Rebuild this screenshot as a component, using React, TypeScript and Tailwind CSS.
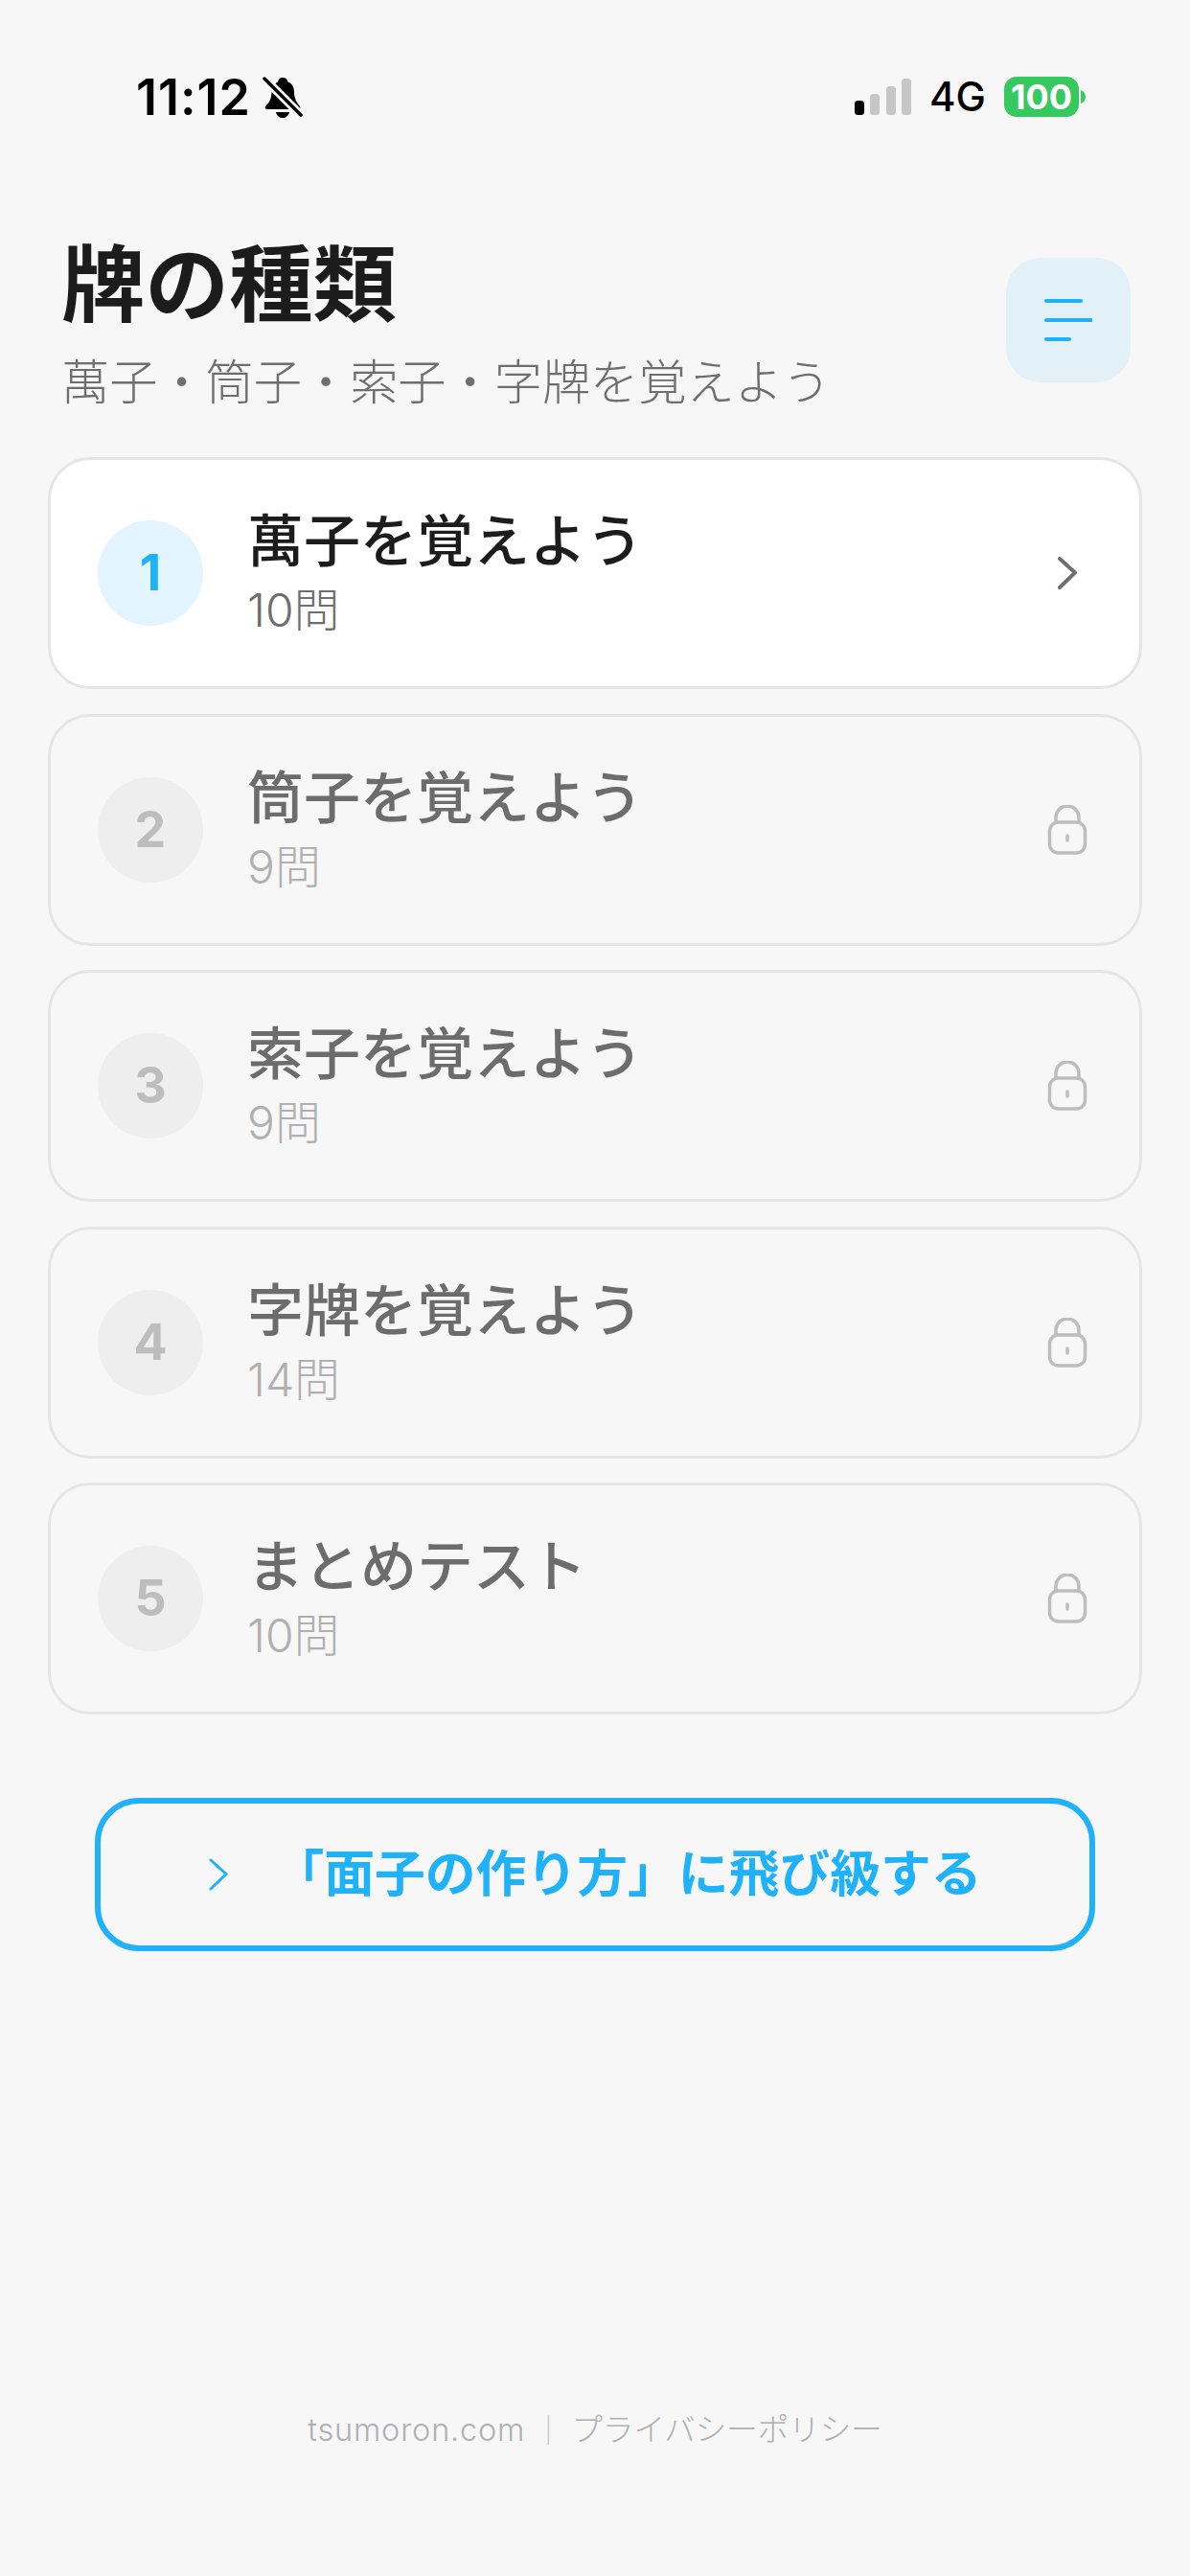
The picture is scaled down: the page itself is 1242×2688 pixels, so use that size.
const lessons = [
  { id: 1, title: "萬子を覚えよう", count: "10問", unlocked: true },
  { id: 2, title: "筒子を覚えよう", count: "9問", unlocked: false },
  { id: 3, title: "索子を覚えよう", count: "9問", unlocked: false },
  { id: 4, title: "字牌を覚えよう", count: "14問", unlocked: false },
  { id: 5, title: "まとめテスト", count: "10問", unlocked: false },
];

function StatusBar() {
  return (
    <div className="flex h-[200px] items-start justify-between pl-[142px] pr-[108px] pt-[74px] font-['Inter',sans-serif] text-black">
      <div className="flex items-center gap-[12px]">
        <span className="text-[52px] leading-[56px] font-semibold tracking-[1px]">11:12</span>
        <svg width="42" height="44" viewBox="0 0 42 44" fill="none">
          <path
            d="M21 1c3 0 5 2 5.500 4.500C31 7 33 11 33 16c0 6 2 10 6 15 1 2 0 3-2 3H5c-2 0-3-1-2-3 3-3 5-6 6-10 1-9 3-14 7-15.500C16.500 3 18 1 21 1Z"
            fill="#000"
          />
          <path d="M14 37c1 4 4 6 7 6s6-2 7-6Z" fill="#000" />
          <path d="M1 1 41 41" stroke="#f7f7f7" strokeWidth="9" />
          <path d="M2 2 40 40" stroke="#000" strokeWidth="3.500" strokeLinecap="round" />
        </svg>
      </div>
      <div className="flex items-center pt-[5px]">
        <svg width="60" height="40" viewBox="0 0 60 40" className="mr-[18px] mt-[2px]">
          <rect x="0" y="23" width="10" height="15" rx="3.500" fill="#000" />
          <rect x="16" y="16" width="10" height="22" rx="3.500" fill="#c6c6c6" />
          <rect x="33" y="8" width="10" height="30" rx="3.500" fill="#c6c6c6" />
          <rect x="49" y="0" width="10" height="38" rx="3.500" fill="#c6c6c6" />
        </svg>
        <span className="text-[42px] leading-[44px] font-medium">4G</span>
        <div className="ml-[19px] flex h-[42px] w-[78px] items-center justify-center rounded-[13px] bg-[#36c95f] text-[36px] leading-none font-bold text-white">
          100
        </div>
        <svg width="6" height="14" viewBox="0 0 6 14" className="ml-[2px]">
          <path d="M0 0c3 1 5 4 5 7s-2 6-5 7Z" fill="#36c95f" />
        </svg>
      </div>
    </div>
  );
}

function LockIcon() {
  return (
    <svg width="42" height="52" viewBox="0 0 42 52" fill="none" stroke="#bdbdbd" strokeWidth="3.500">
      <rect x="2.500" y="18" width="37" height="32" rx="9" />
      <path d="M9 18v-5a12 12 0 0 1 24 0v5" />
      <path d="M21 32v5" strokeLinecap="round" />
    </svg>
  );
}

function ChevronRight({ color, stroke }: { color: string; stroke: number }) {
  return (
    <svg width="22" height="34" viewBox="0 0 22 34" fill="none">
      <path d="M3 2 19 16.500 3 32" stroke={color} strokeWidth={stroke} strokeLinecap="round" strokeLinejoin="round" />
    </svg>
  );
}

function LessonCard({ lesson }: { lesson: (typeof lessons)[number] }) {
  const on = lesson.unlocked;
  return (
    <div
      className={`flex h-[242px] items-center rounded-[44px] border-[3px] border-[#e5e5e5] pl-[49px] pr-[53px] ${
        on ? "bg-white" : "bg-[#f7f7f7]"
      }`}
    >
      <div
        className={`flex h-[110px] w-[110px] shrink-0 items-center justify-center rounded-full font-['Inter',sans-serif] text-[52px] font-bold ${
          on ? "bg-[#e1f4ff] text-[#1fb2fb]" : "bg-[#eeeeee] text-[#bdbdbd]"
        }`}
      >
        {lesson.id}
      </div>
      <div className="ml-[46px] flex-1">
        <p className={`text-[59px] leading-[76px] ${on ? "font-medium text-[#1c1c1c]" : "font-medium text-[#6c6c6c]"}`}>
          {lesson.title}
        </p>
        <p className={`mt-[2px] text-[48px] leading-[64px] font-light ${on ? "text-[#6e6e6e]" : "text-[#b0b0b0]"}`}>
          {lesson.count}
        </p>
      </div>
      <div className="flex w-[44px] justify-center">
        {on ? <ChevronRight color="#707070" stroke={4} /> : <LockIcon />}
      </div>
    </div>
  );
}

export default function App() {
  return (
    <div className="flex min-h-[2688px] w-full flex-col bg-[#f7f7f7] font-['Inter','Noto_Sans_CJK_JP',sans-serif]">
      <StatusBar />

      <header className="flex items-start justify-between pl-[64px] pr-[62px] pt-[42px]">
        <div>
          <h1 className="text-[87.500px] leading-[110px] font-bold text-[#1c1c1c]">牌の種類</h1>
          <p className="mt-[11px] text-[50.200px] leading-[72px] font-light text-[#6e6e6e]">萬子・筒子・索子・字牌を覚えよう</p>
        </div>
        <button type="button" className="mt-[27px] flex h-[130px] w-[130px] items-center justify-center rounded-[36px] bg-[#e2f0f8]">
          <svg width="50" height="44" viewBox="0 0 50 44" fill="none" stroke="#1fb2fb" strokeWidth="4" strokeLinecap="round">
            <path d="M2 2h36" />
            <path d="M2 22h47" />
            <path d="M2 42h24" />
          </svg>
        </button>
      </header>

      <div className="mt-[42px] flex flex-col gap-[25.500px] px-[50px]">
        {lessons.map((lesson) => (
          <LessonCard key={lesson.id} lesson={lesson} />
        ))}
      </div>

      <div className="mt-[87px] px-[99px]">
        <button
          type="button"
          className="flex h-[160px] w-full items-center justify-center gap-[46px] rounded-[46px] border-[6px] border-[#1fb2fb] bg-[#f7f7f7] text-[52.800px] font-bold text-[#1fb2fb]"
        >
          <ChevronRight color="#1fb2fb" stroke={3} />
          <span>「面子の作り方」に飛び級する</span>
        </button>
      </div>

      <footer className="mt-[476px] flex items-center justify-center text-[32.500px] leading-[48px] font-light text-[#b0b0b0]">
        <span className="tracking-[0.800px]">tsumoron.com</span>
        <span className="mx-[20px] text-[26px] text-[#cfcfcf]">|</span>
        <span>プライバシーポリシー</span>
      </footer>
    </div>
  );
}
